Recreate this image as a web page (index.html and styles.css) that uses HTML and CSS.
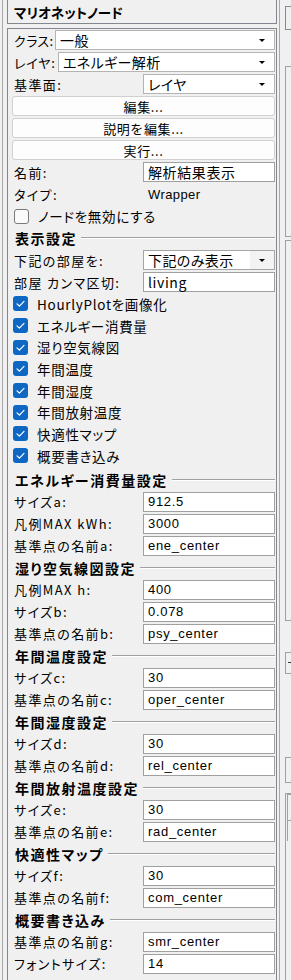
FILE: index.html
```html
<!DOCTYPE html>
<html lang="ja">
<head>
    <meta charset="UTF-8">
    <meta name="viewport" content="width=device-width, initial-scale=1.0">
    <title>マリオネットノード</title>
    <link rel="stylesheet" href="styles.css">
</head>
<body>

<div class="window">
    <div class="pane">
        <div class="title-box">マリオネットノード</div>

        <div class="panel">
            <!-- 基本情報 -->
            <div class="row">
                <span class="label w-class">クラス:</span>
                <div class="combo"><span class="combo-text">一般</span><i class="arrow"></i></div>
            </div>
            <div class="row">
                <span class="label w-layer">レイヤ:</span>
                <div class="combo"><span class="combo-text">エネルギー解析</span><i class="arrow"></i></div>
            </div>
            <div class="row">
                <span class="label">基準面:</span>
                <div class="combo"><span class="combo-text">レイヤ</span><i class="arrow"></i></div>
            </div>

            <div class="row"><button class="btn">編集...</button></div>
            <div class="row"><button class="btn">説明を編集...</button></div>
            <div class="row"><button class="btn">実行...</button></div>

            <div class="row">
                <span class="label">名前:</span>
                <div class="field jp">解析結果表示</div>
            </div>
            <div class="row">
                <span class="label">タイプ:</span>
                <span class="type-value">Wrapper</span>
            </div>
            <div class="check">
                <span class="box"></span>
                <span class="check-text">ノードを無効にする</span>
            </div>

            <!-- 表示設定 -->
            <div class="group">表示設定</div>
            <div class="row">
                <span class="label">下記の部屋を:</span>
                <div class="combo combo-alt"><span class="combo-text">下記のみ表示</span><span class="arrow-box"><i class="arrow"></i></span></div>
            </div>
            <div class="row">
                <span class="label">部屋 カンマ区切:</span>
                <div class="field jp">living</div>
            </div>

            <div class="check-list">
                <div class="check"><span class="box checked"><svg viewBox="0 0 15 15"><polyline points="4,7.8 6.4,10.2 11,5.4"/></svg></span><span class="check-text">HourlyPlotを画像化</span></div>
                <div class="check"><span class="box checked"><svg viewBox="0 0 15 15"><polyline points="4,7.8 6.4,10.2 11,5.4"/></svg></span><span class="check-text">エネルギー消費量</span></div>
                <div class="check"><span class="box checked"><svg viewBox="0 0 15 15"><polyline points="4,7.8 6.4,10.2 11,5.4"/></svg></span><span class="check-text">湿り空気線図</span></div>
                <div class="check"><span class="box checked"><svg viewBox="0 0 15 15"><polyline points="4,7.8 6.4,10.2 11,5.4"/></svg></span><span class="check-text">年間温度</span></div>
                <div class="check"><span class="box checked"><svg viewBox="0 0 15 15"><polyline points="4,7.8 6.4,10.2 11,5.4"/></svg></span><span class="check-text">年間湿度</span></div>
                <div class="check"><span class="box checked"><svg viewBox="0 0 15 15"><polyline points="4,7.8 6.4,10.2 11,5.4"/></svg></span><span class="check-text">年間放射温度</span></div>
                <div class="check"><span class="box checked"><svg viewBox="0 0 15 15"><polyline points="4,7.8 6.4,10.2 11,5.4"/></svg></span><span class="check-text">快適性マップ</span></div>
                <div class="check"><span class="box checked"><svg viewBox="0 0 15 15"><polyline points="4,7.8 6.4,10.2 11,5.4"/></svg></span><span class="check-text">概要書き込み</span></div>
            </div>

            <!-- エネルギー消費量設定 -->
            <div class="group">エネルギー消費量設定</div>
            <div class="row"><span class="label">サイズa:</span><div class="field">912.5</div></div>
            <div class="row"><span class="label">凡例MAX kWh:</span><div class="field">3000</div></div>
            <div class="row"><span class="label">基準点の名前a:</span><div class="field">ene_center</div></div>

            <!-- 湿り空気線図設定 -->
            <div class="group">湿り空気線図設定</div>
            <div class="row"><span class="label">凡例MAX h:</span><div class="field">400</div></div>
            <div class="row"><span class="label">サイズb:</span><div class="field">0.078</div></div>
            <div class="row"><span class="label">基準点の名前b:</span><div class="field">psy_center</div></div>

            <!-- 年間温度設定 -->
            <div class="group">年間温度設定</div>
            <div class="row"><span class="label">サイズc:</span><div class="field">30</div></div>
            <div class="row"><span class="label">基準点の名前c:</span><div class="field">oper_center</div></div>

            <!-- 年間湿度設定 -->
            <div class="group">年間湿度設定</div>
            <div class="row"><span class="label">サイズd:</span><div class="field">30</div></div>
            <div class="row"><span class="label">基準点の名前d:</span><div class="field">rel_center</div></div>

            <!-- 年間放射温度設定 -->
            <div class="group">年間放射温度設定</div>
            <div class="row"><span class="label">サイズe:</span><div class="field">30</div></div>
            <div class="row"><span class="label">基準点の名前e:</span><div class="field">rad_center</div></div>

            <!-- 快適性マップ -->
            <div class="group">快適性マップ</div>
            <div class="row"><span class="label">サイズf:</span><div class="field">30</div></div>
            <div class="row"><span class="label">基準点の名前f:</span><div class="field">com_center</div></div>

            <!-- 概要書き込み -->
            <div class="group">概要書き込み</div>
            <div class="row"><span class="label">基準点の名前g:</span><div class="field">smr_center</div></div>
            <div class="row"><span class="label">フォントサイズ:</span><div class="field">14</div></div>
        </div>
    </div>

    <!-- 右側のパネル (見切れ部分) -->
    <div class="strip">
        <div class="side-box s1"></div>
        <div class="side-box s2"></div>
        <div class="side-box s3"></div>
        <div class="side-box s4"><span class="dash"></span></div>
        <div class="side-box s5"></div>
        <div class="side-box s6"><div class="inner"></div><div class="inner-line"></div></div>
    </div>
</div>

</body>
</html>
```

FILE: styles.css
```css
* {
    box-sizing: border-box;
}

body {
    margin: 0;
    background-color: #f0f0f0;
    font-family: "Noto Sans CJK JP", sans-serif;
    color: #000;
    overflow: hidden;
}

.window {
    display: flex;
    height: 980px;
    overflow: hidden;
}

.pane {
    flex: none;
    width: 278px;
    margin-left: 2px;
    padding: 0 2px 0 4px;
    border-left: 1px solid #a9a9a9;
    border-right: 1px solid #a9a9a9;
}

.title-box {
    height: 25px;
    margin-top: -1px;
    padding-left: 6px;
    border: 1px solid #828790;
    font-size: 13.5px;
    font-weight: bold;
    font-feature-settings: "palt";
    line-height: 24px;
}

.panel {
    margin-top: 4px;
    padding: 0 1px 0 4px;
    border: 1px solid #828790;
    border-bottom: none;
    height: 960px;
}

.row {
    display: flex;
    align-items: center;
    height: 22px;
}

.label {
    flex: none;
    width: 131px;
    padding-left: 2px;
    font-size: 13px;
    letter-spacing: 1.4px;
    font-feature-settings: "palt";
    white-space: nowrap;
}

.w-class {
    width: 43px;
    letter-spacing: 0.4px;
}

.w-layer {
    width: 46px;
    letter-spacing: 0.8px;
}

.combo {
    flex: 1;
    display: flex;
    align-items: center;
    height: 20px;
    padding-left: 4px;
    border: 1px solid #b4b4b4;
    background-color: #fff;
}

.combo-text {
    flex: 1;
    font-size: 14px;
    font-feature-settings: "palt";
    letter-spacing: 0.4px;
    line-height: 18px;
}

.arrow {
    width: 0;
    height: 0;
    margin-right: 9px;
    border-left: 3px solid transparent;
    border-right: 3px solid transparent;
    border-top: 3px solid #000;
}

.combo-alt {
    border-color: #a5a5a5;
}

.arrow-box {
    display: flex;
    align-items: center;
    justify-content: flex-end;
    align-self: stretch;
    width: 24px;
    background-color: #f3f3f3;
}

.btn {
    width: 100%;
    height: 20px;
    padding: 0;
    border: 1px solid #d0d0d0;
    border-radius: 3px;
    background-color: #fdfdfd;
    font-family: "Noto Sans CJK JP", sans-serif;
    font-size: 13px;
    letter-spacing: 0.6px;
    line-height: 17px;
    color: #000;
}

.field {
    flex: 1;
    height: 20px;
    padding-left: 4px;
    border: 1px solid #a0a0a0;
    background-color: #fff;
    font-family: "Liberation Sans", "Noto Sans CJK JP", sans-serif;
    font-size: 13px;
    letter-spacing: 0.7px;
    line-height: 18px;
    white-space: nowrap;
}

.field.jp {
    font-family: "Noto Sans CJK JP", sans-serif;
    font-size: 14px;
    letter-spacing: 0.6px;
}

.type-value {
    padding-left: 5px;
    font-family: "Liberation Sans", sans-serif;
    font-size: 13px;
    letter-spacing: 0.4px;
}

.check {
    display: flex;
    align-items: center;
    height: 22px;
    padding-left: 2px;
}

.box {
    flex: none;
    width: 15px;
    height: 15px;
    border: 1px solid #7a7a7a;
    border-radius: 3px;
    background-color: #fbfbfb;
}

.box.checked {
    margin-left: -1px;
    border: none;
    background-color: #0f67c4;
}

.box svg {
    display: block;
    width: 15px;
    height: 15px;
}

.box polyline {
    fill: none;
    stroke: #fff;
    stroke-width: 1.2;
    stroke-linecap: round;
    stroke-linejoin: round;
}

.check-text {
    margin-left: 9px;
    font-size: 13.5px;
    letter-spacing: 0.7px;
    font-feature-settings: "palt";
    white-space: nowrap;
}

.check-list .check {
    height: 21.7px;
}

.check-list {
    margin-bottom: 2.4px;
}

.group {
    display: flex;
    align-items: center;
    height: 22px;
    padding-left: 3px;
    font-size: 14px;
    font-weight: bold;
    letter-spacing: 1.5px;
    font-feature-settings: "palt";
    white-space: nowrap;
}

.group::after {
    content: "";
    flex: 1;
    margin-left: 4px;
    border-top: 1px solid #a0a0a0;
    border-bottom: 1px solid #fff;
}

/* 右側の見切れたパネル */
.strip {
    flex: 1;
    display: flex;
    flex-direction: column;
    padding-left: 5px;
}

.side-box {
    flex: none;
    border: 1px solid #a0a0a0;
    border-right: none;
}

.s1 {
    margin-top: 6px;
    height: 24px;
    border-color: #8a8a8a;
}

.s2 {
    margin-top: 36px;
    height: 171px;
}

.s3 {
    margin-top: 3px;
    height: 381px;
}

.s4 {
    margin-top: 31px;
    height: 22px;
    padding: 9px 0 0 2px;
}

.dash {
    display: block;
    width: 3px;
    height: 1px;
    background-color: #333;
}

.s5 {
    margin-top: 83px;
    height: 26px;
}

.s6 {
    margin-top: 10px;
    height: 200px;
    padding-left: 1px;
    border-bottom: none;
}

.inner {
    height: 27px;
    border: 1px solid #a0a0a0;
    border-right: none;
}

.inner-line {
    width: 2px;
    height: 20px;
    border-left: 1px solid #a0a0a0;
}
```
